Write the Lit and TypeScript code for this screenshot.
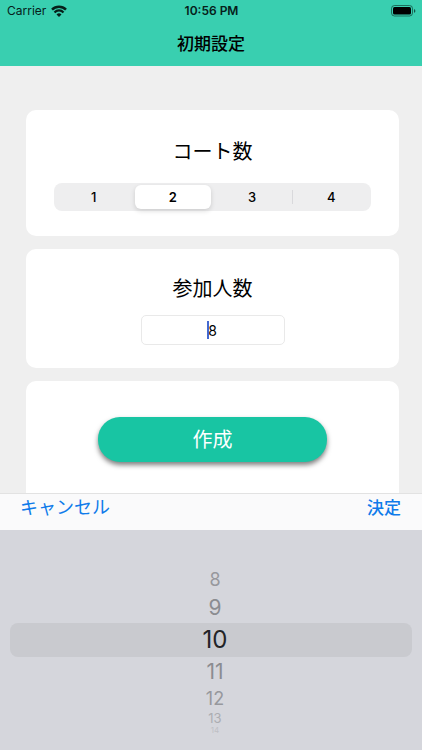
import { LitElement, html, css, svg } from "lit";
import { customElement, state } from "lit/decorators.js";
import { classMap } from "lit/directives/class-map.js";

const wifiIcon = html`<svg class="wifi" viewBox="0 0 16 12" aria-hidden="true">
  ${svg`<path d="M1 4.6A10 10 0 0 1 15 4.6" fill="none" stroke="#06201a" stroke-width="2.5"/>
  <path d="M3.500 7.4A6.2 6.2 0 0 1 12.500 7.4" fill="none" stroke="#06201a" stroke-width="2.2"/>
  <path d="M8 12L5.500 9.500A3.600 3.600 0 0 1 10.500 9.500Z" fill="#06201a"/>`}
</svg>`;

const batteryIcon = html`<svg class="battery" viewBox="0 0 25 12" aria-hidden="true">
  ${svg`<rect x="0.5" y="0.5" width="21" height="10.500" rx="3" fill="none" stroke="#06201a" stroke-opacity="0.55"/>
  <rect x="2" y="2" width="18" height="7.500" rx="1.500" fill="#000"/>
  <path d="M23 4a2 2 0 0 1 0 3.800Z" fill="#06201a" fill-opacity="0.7"/>`}
</svg>`;

@customElement("status-bar")
export class StatusBar extends LitElement {
  static styles = css`
    :host {
      display: grid;
      grid-template-columns: 1fr auto 1fr;
      align-items: center;
      height: 22px;
      padding: 0 6px 0 7px;
      font-size: 12px;
      line-height: 16px;
      color: #06201a;
    }
    .carrier {
      display: flex;
      align-items: center;
      gap: 5px;
    }
    .time {
      font-weight: 600;
    }
    .wifi {
      width: 16px;
      height: 12px;
    }
    .battery {
      width: 25px;
      height: 12px;
      justify-self: end;
    }
  `;

  render() {
    return html`
      <span class="carrier">Carrier ${wifiIcon}</span>
      <span class="time">10:56 PM</span>
      ${batteryIcon}
    `;
  }
}

@customElement("segmented-control")
export class SegmentedControl extends LitElement {
  @state() selected = 2;

  static styles = css`
    :host {
      display: block;
    }
    .track {
      display: flex;
      height: 28px;
      border-radius: 8px;
      background: #eeeeef;
    }
    .segment {
      flex: 1;
      display: flex;
      align-items: center;
      justify-content: center;
      margin: 2px;
      border-radius: 6px;
      font-size: 13px;
      font-weight: 500;
      color: #000;
    }
    .selected {
      background: #fff;
      font-weight: 600;
      box-shadow: 0 2px 5px rgba(0, 0, 0, 0.14);
    }
    .divider {
      width: 1px;
      margin: 7px -1px 7px 0;
      background: #d9d9dc;
    }
    input {
      appearance: none;
      width: 0;
      margin: 0;
    }
  `;

  render() {
    return html`<div class="track" role="radiogroup" aria-label="コート数">
      ${[1, 2, 3, 4].map(
        (n) => html`
          ${n > 1 && n !== this.selected && n - 1 !== this.selected
            ? html`<span class="divider"></span>`
            : ""}
          <label class=${classMap({ segment: true, selected: n === this.selected })}>
            <input
              type="radio"
              name="courts"
              .checked=${n === this.selected}
              @change=${() => (this.selected = n)}
            />${n}
          </label>
        `
      )}
    </div>`;
  }
}

@customElement("number-wheel")
export class NumberWheel extends LitElement {
  @state() value = 10;

  static styles = css`
    :host {
      display: block;
      height: 220px;
      box-sizing: border-box;
      padding: 37px 10px 0;
      background: #d5d6dc;
      overflow: hidden;
    }
    .row {
      display: flex;
      justify-content: center;
      box-sizing: border-box;
      padding-left: 8px;
      color: #8b8c91;
    }
    .above2 {
      font-size: 18px;
      line-height: 26px;
      color: #97989d;
    }
    .above1,
    .below1 {
      font-size: 21px;
      line-height: 30px;
    }
    .current {
      border-radius: 8px;
      background: #c9cacf;
      font-size: 24px;
      line-height: 34px;
      color: #232427;
    }
    .below2 {
      font-size: 18px;
      line-height: 24px;
      color: #97989d;
    }
    .below3 {
      font-size: 13px;
      line-height: 15px;
      color: #acadb2;
    }
    .below4 {
      font-size: 8px;
      line-height: 8px;
      color: #bfc0c5;
    }
    input {
      appearance: none;
      width: 0;
      height: 0;
      margin: 0;
    }
  `;

  private rows = ["above2", "above1", "current", "below1", "below2", "below3", "below4"];

  render() {
    return html`<div role="radiogroup" aria-label="参加人数">
      ${this.rows.map((name, i) => {
        const n = this.value + i - 2;
        return html`<label class="row ${name}">
          <input
            type="radio"
            name="members"
            .checked=${n === this.value}
            @change=${() => (this.value = n)}
          />${n}
        </label>`;
      })}
    </div>`;
  }
}

@customElement("app-root")
export class AppRoot extends LitElement {
  static styles = css`
    :host {
      display: flex;
      flex-direction: column;
      height: 100vh;
      overflow: hidden;
      background: #efefef;
      color: #000;
      font-family: Inter, "Noto Sans CJK JP", sans-serif;
    }
    header {
      flex: none;
      height: 66px;
      background: #39cfb0;
    }
    h1 {
      margin: 8px 0 0;
      text-align: center;
      font-size: 17px;
      line-height: 28px;
      font-weight: 500;
    }
    main {
      flex: 1;
      min-height: 0;
      overflow: hidden;
      display: flex;
      flex-direction: column;
      gap: 13px;
      padding: 44px 23px 0 26px;
    }
    .card {
      flex: none;
      display: flex;
      flex-direction: column;
      align-items: center;
      box-sizing: border-box;
      border-radius: 10px;
      background: #fff;
    }
    .title {
      font-size: 20px;
      line-height: 30px;
      font-weight: 400;
    }
    .courts {
      gap: 16px;
      padding: 27px 28px 25px;
    }
    .members {
      gap: 11px;
      padding: 25px 28px 23px;
    }
    .action {
      padding: 36px 28px 48px;
    }
    segmented-control {
      align-self: stretch;
    }
    .field {
      position: relative;
      display: flex;
      width: 144px;
    }
    .field input {
      width: 100%;
      height: 30px;
      box-sizing: border-box;
      border: 1px solid #e9e9e9;
      border-radius: 5px;
      padding: 0;
      background: #fff;
      text-align: center;
      font: inherit;
      font-size: 14px;
      color: #000;
    }
    .caret {
      position: absolute;
      left: 66px;
      top: 6px;
      width: 2px;
      height: 18px;
      background: #4469d0;
    }
    .create {
      width: 229px;
      height: 45px;
      border: 0;
      border-radius: 22px;
      padding: 0;
      background: #18c5a3;
      box-shadow: 0 3px 5px rgba(0, 0, 0, 0.5);
      font: inherit;
      font-size: 20px;
      line-height: 30px;
      font-weight: 400;
      color: #fff;
    }
    .toolbar {
      flex: none;
      display: flex;
      justify-content: space-between;
      align-items: flex-start;
      height: 37px;
      box-sizing: border-box;
      border-top: 1px solid #e2e2e2;
      padding: 0 21px 0 20px;
      background: #fafafb;
    }
    .toolbar button {
      border: 0;
      padding: 0;
      background: none;
      font: inherit;
      font-size: 18px;
      line-height: 28px;
      color: #0f7bea;
    }
    .toolbar .done {
      font-size: 17px;
      font-weight: 500;
    }
    number-wheel {
      flex: none;
    }
  `;

  render() {
    return html`
      <header>
        <status-bar></status-bar>
        <h1>初期設定</h1>
      </header>
      <main>
        <section class="card courts">
          <span class="title">コート数</span>
          <segmented-control></segmented-control>
        </section>
        <section class="card members">
          <label class="title" for="members">参加人数</label>
          <div class="field">
            <input id="members" type="text" inputmode="numeric" value="8" />
            <span class="caret"></span>
          </div>
        </section>
        <section class="card action">
          <button class="create" type="button">作成</button>
        </section>
      </main>
      <div class="toolbar">
        <button type="button">キャンセル</button>
        <button class="done" type="button">決定</button>
      </div>
      <number-wheel></number-wheel>
    `;
  }
}
